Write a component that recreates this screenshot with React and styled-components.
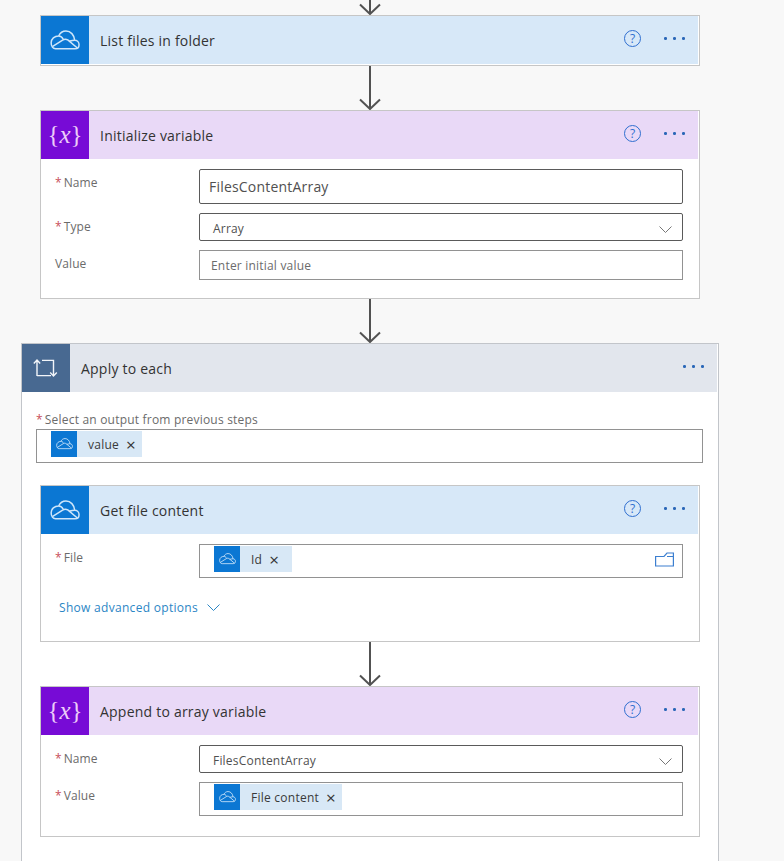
import React from 'react';
import styled, { createGlobalStyle } from 'styled-components';

const GlobalStyle = createGlobalStyle`
  html, body {
    margin: 0;
    padding: 0;
    height: 861px;
    overflow: hidden;
    background: #f8f8f8;
  }
  body {
    font-family: "Open Sans", "Noto Sans", sans-serif;
  }
`;

const COLORS = {
  blue: { icon: '#0b77d3', head: '#d7e8f8' },
  purple: { icon: '#770bd6', head: '#e9d9f7' },
  slate: { icon: '#486991', head: '#e2e6ed' },
};

const Flow = styled.div`
  width: 740px;
  display: flex;
  flex-direction: column;
  align-items: center;
`;

const Card = styled.div`
  width: 660px;
  box-sizing: border-box;
  flex: none;
  background: #fff;
  border: 1px solid #c6c6c6;
  padding-bottom: ${(p) => p.$bottom || 0}px;
`;

const LoopCard = styled(Card)`
  width: 698px;
  height: 540px;
  border-color: #c2c5ca;
  display: flex;
  flex-direction: column;
  align-items: center;
`;

const Header = styled.div`
  display: flex;
  align-items: center;
  align-self: stretch;
  height: 48px;
  margin-right: 1px;
  background: ${(p) => COLORS[p.$tone].head};
`;

const IconBox = styled.div`
  width: 48px;
  height: 48px;
  flex: none;
  display: flex;
  align-items: center;
  justify-content: center;
  background: ${(p) => COLORS[p.$tone].icon};
`;

const Title = styled.div`
  flex: 1;
  margin-left: 11px;
  font-size: 14px;
  letter-spacing: 0.22px;
  color: #333;
`;

const HelpIcon = styled.div`
  width: 15px;
  height: 15px;
  margin: -3px 23px 0 0;
  border: 1px solid #2f6fd0;
  border-radius: 50%;
  display: flex;
  align-items: center;
  justify-content: center;
  font-size: 12px;
  line-height: 1;
  color: #2f6fd0;
`;

const Dots = styled.div`
  display: flex;
  gap: 6.5px;
  margin: -3px 13.5px 0 0;
`;

const Dot = styled.span`
  width: 2.5px;
  height: 2.5px;
  border-radius: 50%;
  background: #2a67b8;
`;

const Curly = styled.div`
  font-family: "Liberation Serif", serif;
  font-size: 25px;
  line-height: 1;
  color: #eccdf8;
  display: flex;
  align-items: center;
  margin-top: -2px;
  em {
    font-size: 25px;
  }
`;

const Body = styled.div`
  padding: 10px 16px 0 14px;
  display: flex;
  flex-direction: column;
  gap: 9px;
`;

const Row = styled.div`
  display: flex;
  align-items: flex-start;
`;

const Label = styled.div`
  width: 144px;
  flex: none;
  margin-top: 5px;
  font-size: 12px;
  letter-spacing: 0.1px;
  color: #6b6b6b;
`;

const Star = styled.span`
  color: #c8505a;
  margin-right: 2px;
`;

const Field = styled.div`
  flex: 1;
  box-sizing: border-box;
  height: ${(p) => p.$h}px;
  display: flex;
  align-items: ${(p) => (p.$chips ? 'flex-start' : 'center')};
  justify-content: space-between;
  padding: ${(p) => (p.$chips ? '1px 8px 0 14px' : '0 10px 0 13px')};
  background: #fff;
  border: 1px solid ${(p) => (p.$dark ? '#5a5a5a' : '#929292')};
  border-radius: ${(p) => (p.$dark ? 2 : 0)}px;
  font-size: 12px;
  letter-spacing: 0.2px;
  color: #505050;
`;

const SelectField = styled(Field)`
  padding-top: 2px;
  svg {
    margin-top: 2px;
  }
`;

const BigValue = styled.span`
  font-size: 14px;
  letter-spacing: 0.2px;
  margin-left: -4px;
`;

const Placeholder = styled.span`
  color: #6b6b6b;
  margin-left: -2px;
`;

const Chip = styled.div`
  display: flex;
  align-items: center;
  height: 26px;
  min-width: 78px;
  background: #d8e8f6;
  color: #3a3a3a;
  font-size: 12px;
  letter-spacing: 0.25px;
  padding-right: 6px;
  box-sizing: border-box;
`;

const ChipIcon = styled.div`
  width: 26px;
  height: 26px;
  margin-right: 11px;
  display: flex;
  align-items: center;
  justify-content: center;
  background: #0b77d3;
`;

const ChipClose = styled.span`
  margin-left: 7px;
  font-size: 17px;
  line-height: 1;
  color: #333;
`;

const LoopLabel = styled.div`
  align-self: flex-start;
  margin: 20px 0 1px 14px;
  font-size: 12px;
  letter-spacing: 0.2px;
  line-height: 16px;
  color: #6b6b6b;
`;

const LoopField = styled(Field)`
  flex: none;
  align-self: flex-start;
  width: 667px;
  margin: 0 0 22px 14px;
`;

const AdvancedLink = styled.div`
  display: flex;
  align-items: center;
  gap: 9px;
  margin: 21px 0 0 18px;
  font-size: 12px;
  letter-spacing: 0.3px;
  color: #2b86c5;
`;

const FolderSlot = styled.div`
  margin-top: 6px;
`;

const ArrowSvg = styled.svg`
  display: block;
  flex: none;
  margin: 0 auto;
`;

function Arrow({ height = 44 }) {
  const tip = height - 1;
  return (
    <ArrowSvg width="24" height={height} viewBox={`0 0 24 ${height}`}>
      <path
        d={`M12 0V${tip}M2 ${tip - 9.5}L12 ${tip}L22 ${tip - 9.5}`}
        fill="none"
        stroke="#525252"
        strokeWidth="2"
      />
    </ArrowSvg>
  );
}

function Cloud({ width = 30 }) {
  return (
    <svg width={width} height={width * 0.66} viewBox="0 0 30 20" fill="none" stroke="#cfe6fa" strokeWidth="1.5" strokeLinejoin="round">
      <path d="M5.5 19H25C27.8 19 29.2 17 29.2 14.8C29.2 12.2 27.2 10.3 24.8 10.3C24.2 5 20.8 1 16 1C12.6 1 10 2.9 8.6 6C4.4 6 1 8.8 1 13C1 16.4 2.8 19 5.5 19Z" />
      <path d="M2.2 16.8L12.6 10.2C14.4 9 16 9 17.8 10L27.5 18.2M8.6 6C10.4 6 12 6.7 13.4 9.6M24.8 10.3C22 10.3 20.5 11 19 11.4" />
    </svg>
  );
}

function LoopIcon() {
  return (
    <svg width="26" height="20" viewBox="0 0 26 20" fill="none" stroke="#f2f5f9" strokeWidth="1.4">
      <path d="M4 18V2M0.8 5.4L4 2L7.2 5.4M4 17.6H18M9 2.4H20.5V18M17.2 14.6L20.5 18L23.8 14.6" />
    </svg>
  );
}

function Chevron({ color = '#777', width = 13 }) {
  return (
    <svg width={width} height="7" viewBox="0 0 13 7" fill="none" stroke={color} strokeWidth="1">
      <path d="M0.5 0.5L6.5 6.5L12.5 0.5" />
    </svg>
  );
}

function FolderIcon() {
  return (
    <svg width="19" height="15" viewBox="0 0 19 15" fill="none" stroke="#3c7fd0" strokeWidth="1.2">
      <path d="M0.6 4.5H9L12 1H18.4V14H0.6ZM12 4.5H18.4" />
    </svg>
  );
}

function CardHeader({ tone, title, help = true }) {
  return (
    <Header $tone={tone}>
      <IconBox $tone={tone}>
        {tone === 'blue' && <Cloud />}
        {tone === 'slate' && <LoopIcon />}
        {tone === 'purple' && (
          <Curly>
            {'{'}
            <em>x</em>
            {'}'}
          </Curly>
        )}
      </IconBox>
      <Title>{title}</Title>
      {help && <HelpIcon>?</HelpIcon>}
      <Dots>
        <Dot />
        <Dot />
        <Dot />
      </Dots>
    </Header>
  );
}

function TokenChip({ text }) {
  return (
    <Chip>
      <ChipIcon>
        <Cloud width={17} />
      </ChipIcon>
      {text}
      <ChipClose>×</ChipClose>
    </Chip>
  );
}

function FormRow({ label, required, children }) {
  return (
    <Row>
      <Label>
        {required && <Star>*</Star>}
        {label}
      </Label>
      {children}
    </Row>
  );
}

export default function App() {
  return (
    <>
      <GlobalStyle />
      <Flow>
        <Arrow height={15} />
        <Card $bottom={1}>
          <CardHeader tone="blue" title="List files in folder" />
        </Card>
        <Arrow />
        <Card $bottom={18}>
          <CardHeader tone="purple" title="Initialize variable" />
          <Body>
            <FormRow label="Name" required>
              <Field $h={35} $dark>
                <BigValue>FilesContentArray</BigValue>
              </Field>
            </FormRow>
            <FormRow label="Type" required>
              <SelectField $h={28} $dark>
                Array
                <Chevron />
              </SelectField>
            </FormRow>
            <FormRow label="Value">
              <Field $h={30}>
                <Placeholder>Enter initial value</Placeholder>
              </Field>
            </FormRow>
          </Body>
        </Card>
        <Arrow />
        <LoopCard>
          <CardHeader tone="slate" title="Apply to each" help={false} />
          <LoopLabel>
            <Star>*</Star>
            Select an output from previous steps
          </LoopLabel>
          <LoopField $h={34} $chips>
            <TokenChip text="value" />
          </LoopField>
          <Card $bottom={25}>
            <CardHeader tone="blue" title="Get file content" />
            <Body>
              <FormRow label="File" required>
                <Field $h={34} $chips>
                  <TokenChip text="Id" />
                  <FolderSlot>
                    <FolderIcon />
                  </FolderSlot>
                </Field>
              </FormRow>
            </Body>
            <AdvancedLink>
              Show advanced options
              <Chevron color="#2b86c5" />
            </AdvancedLink>
          </Card>
          <Arrow />
          <Card $bottom={20}>
            <CardHeader tone="purple" title="Append to array variable" />
            <Body>
              <FormRow label="Name" required>
                <SelectField $h={28} $dark>
                  FilesContentArray
                  <Chevron />
                </SelectField>
              </FormRow>
              <FormRow label="Value" required>
                <Field $h={34} $chips>
                  <TokenChip text="File content" />
                </Field>
              </FormRow>
            </Body>
          </Card>
        </LoopCard>
      </Flow>
    </>
  );
}
